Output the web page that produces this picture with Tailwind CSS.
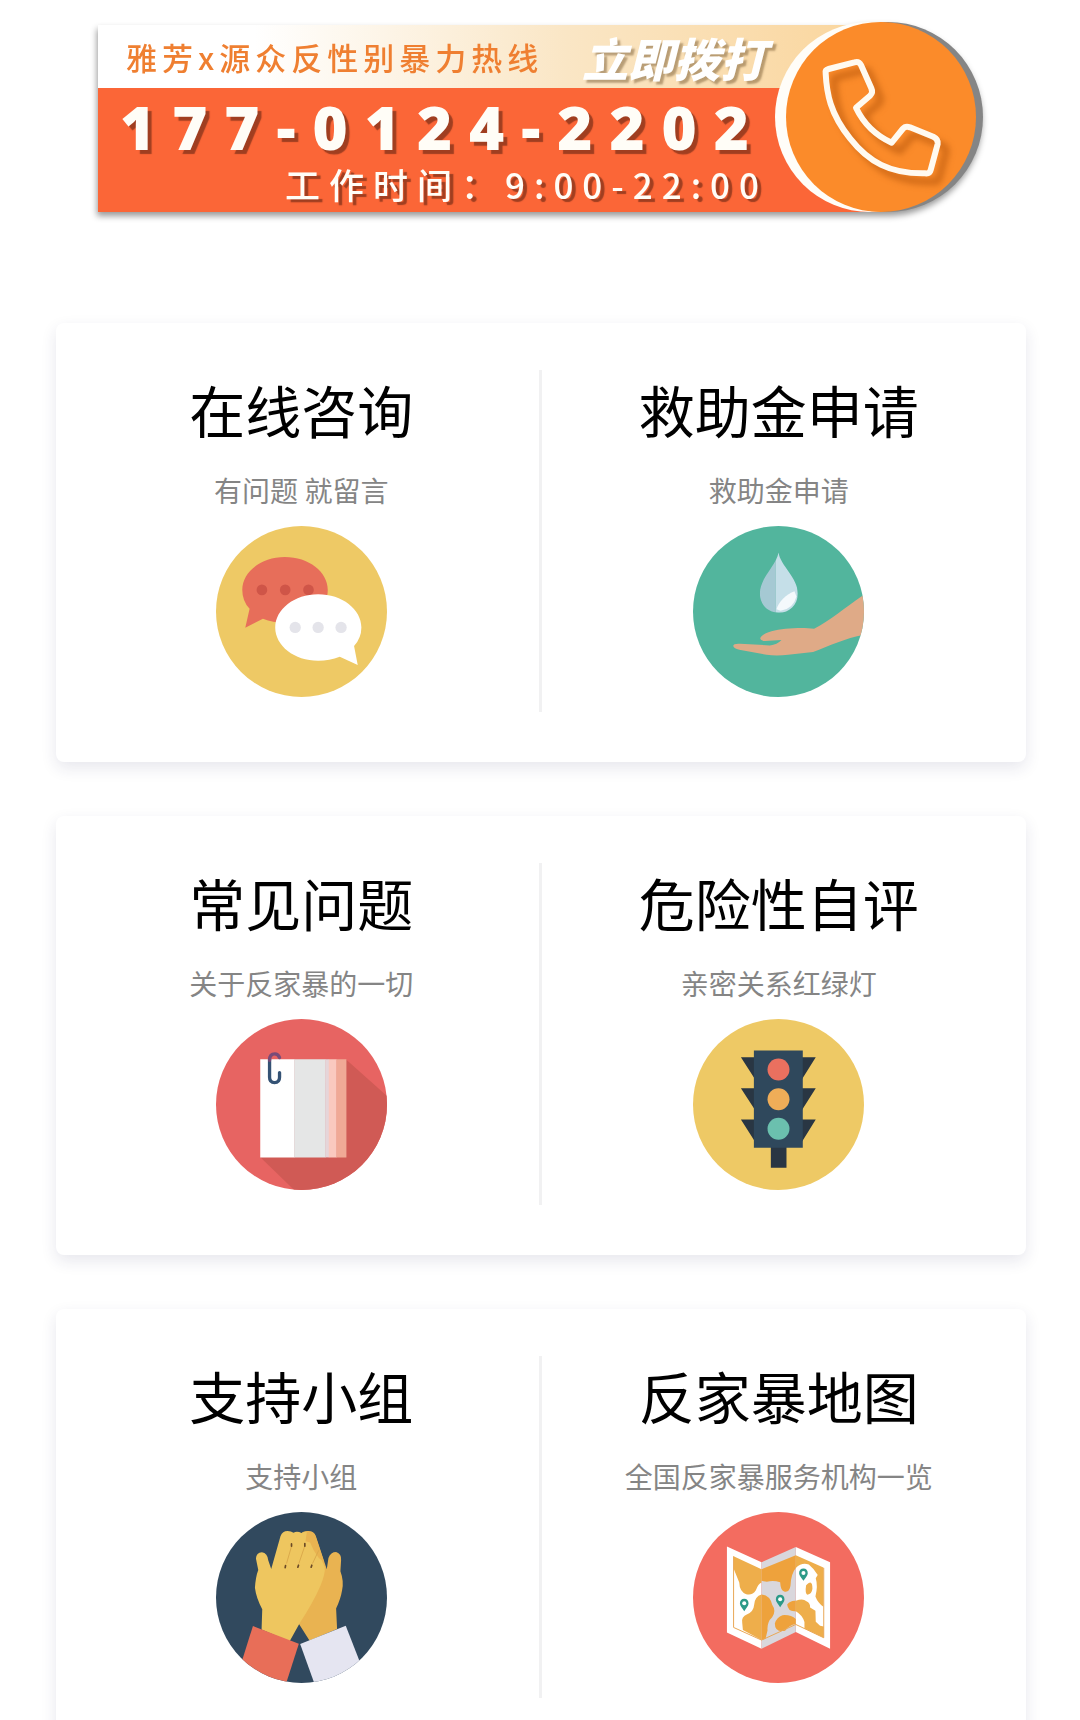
<!DOCTYPE html>
<html lang="zh-CN">
<head>
<meta charset="utf-8">
<meta name="viewport" content="width=device-width, initial-scale=1">
<title>反家暴服务</title>
<script src="https://cdn.jsdelivr.net/npm/@tailwindcss/browser@4"></script>
</head>
<body class="bg-white font-['Noto_Sans_CJK_SC',sans-serif] text-black">
<div class="h-screen overflow-hidden">

<header class="pt-[15px] pr-[90px] pl-[98px]">
  <a href="tel:177-0124-2202" class="flex items-start drop-shadow-[-1px_4px_3px_rgba(0,0,0,0.4)]">
    <div class="mt-[10px] -mr-[110px] flex-1 whitespace-nowrap">
      <div class="flex h-[63px] items-center bg-linear-to-r from-white from-20% via-[#fae6c5] via-60% to-[#fad59b] pl-7">
        <span class="w-[456px] text-[31px] leading-10 font-medium tracking-[5px] text-[#ef7f31]">雅芳x源众反性别暴力热线</span>
        <span class="text-[46px] leading-[48px] font-black text-white italic [text-shadow:3px_3px_2px_rgba(120,90,50,0.5)]">立即拨打</span>
      </div>
      <div class="h-[124px] bg-[#fb6637] pt-[7px] pl-[22px] text-[#fffdf7]">
        <div class="font-['Noto_Sans',sans-serif] text-[60px] leading-[64px] font-black tracking-[17px] [text-shadow:4px_4px_1px_rgba(130,50,25,0.75)]">177-0124-2202</div>
        <div class="pl-[165px] text-[35px] leading-[50px] font-medium tracking-[9px] [text-shadow:4px_3px_1px_rgba(130,50,25,0.75)]">工作时间：9:00-22:00</div>
      </div>
    </div>
    <svg class="relative h-[205px] w-[220px] shrink-0" viewBox="0 0 220 205" aria-hidden="true">
      <circle cx="118" cy="102" r="95" fill="#858585"/>
      <circle cx="100" cy="102" r="95" fill="#fffdf8"/>
      <circle cx="111" cy="102" r="95" fill="#fb8b2a"/>
      <g transform="translate(-230 -5) scale(.33333)" fill="none" stroke-linejoin="round">
        <path class="blur-[10px]" transform="translate(25 25)" stroke="#b8570c" stroke-opacity=".65" stroke-width="20" d="M857 190Q855 180 866 177L943 157Q957 153 963 165L994 235Q1000 248 990 257L948 293C968 335 1005 375 1055 398L1088 357Q1096 347 1110 352L1180 380Q1195 387 1193 402L1172 480Q1169 492 1155 490C1050 492 985 455 930 385C870 310 860 250 857 190Z"/>
        <path stroke="#fffaf0" stroke-width="18" d="M857 190Q855 180 866 177L943 157Q957 153 963 165L994 235Q1000 248 990 257L948 293C968 335 1005 375 1055 398L1088 357Q1096 347 1110 352L1180 380Q1195 387 1193 402L1172 480Q1169 492 1155 490C1050 492 985 455 930 385C870 310 860 250 857 190Z"/>
      </g>
    </svg>
  </a>
</header>

<main class="mt-[103px] mr-[54px] ml-[56px] flex flex-col gap-[54px]">

  <section class="flex rounded-lg bg-white py-[47px] pr-[10px] pl-2 shadow-[0_6px_16px_rgba(40,40,90,0.11)]">
    <a href="#consult" class="flex flex-1 flex-col items-center pt-[10px] pb-[18px]">
      <h2 class="text-[56px] leading-[58px]">在线咨询</h2>
      <p class="mt-[32px] text-[28px] leading-10 text-[#858585]">有问题 就留言</p>
      <svg class="mt-4 size-[171px]" viewBox="49 50 514 514" aria-hidden="true">
        <circle cx="306" cy="307" r="257" fill="#eec965"/>
        <path fill="#e76e5a" d="M256 143C328 143 385 188 385 242C385 298 328 341 256 341Q220 341 190 329L137 356L150 299Q128 275 128 242C128 188 185 143 256 143Z"/>
        <g fill="#cf5548"><circle cx="187" cy="242" r="16"/><circle cx="257" cy="242" r="16"/><circle cx="327" cy="242" r="16"/></g>
        <path fill="#fff" d="M356 255C428 255 486 300 486 355Q486 386 464 411L475 468L421 443Q390 455 356 455C285 455 227 410 227 355C227 300 285 255 356 255Z"/>
        <g fill="#e4e4ea"><circle cx="287" cy="355" r="17"/><circle cx="356" cy="355" r="17"/><circle cx="425" cy="355" r="17"/></g>
      </svg>
    </a>
    <div class="mb-[3px] w-[3px] bg-[#f1f1f2]"></div>
    <a href="#relief" class="flex flex-1 flex-col items-center pt-[10px] pb-[18px]">
      <h2 class="text-[56px] leading-[58px]">救助金申请</h2>
      <p class="mt-[32px] text-[28px] leading-10 text-[#858585]">救助金申请</p>
      <svg class="mt-4 size-[171px]" viewBox="39 50 514 514" aria-hidden="true">
        <clipPath id="relief-disc"><circle cx="296" cy="307" r="257"/></clipPath>
        <clipPath id="drop"><path d="M296 130C302 170 354 205 354 253C354 288 328 311 297 311C266 311 240 288 240 253C240 205 290 170 296 130Z"/></clipPath>
        <circle cx="296" cy="307" r="257" fill="#52b59d"/>
        <g clip-path="url(#drop)">
          <path fill="#a5c9d3" d="M230 120H288V320H230Z"/>
          <path fill="#c5dfe8" d="M288 120H360V320H288Z"/>
          <path fill="#f4f9fc" d="M344 246C320 254 296 278 290 300L302 305Q340 300 350 262Z"/>
        </g>
        <path clip-path="url(#relief-disc)" fill="#dfaa87" d="M560 252L545 262C500 292 450 335 403 359C365 354 310 358 275 366Q248 373 241 387Q242 396 256 396L305 393Q292 407 270 409L180 404Q160 403 160 411Q162 419 178 422L260 437Q290 442 325 437L400 429C450 410 500 386 560 376Z"/>
      </svg>
    </a>
  </section>

  <section class="flex rounded-lg bg-white py-[47px] pr-[10px] pl-2 shadow-[0_6px_16px_rgba(40,40,90,0.11)]">
    <a href="#faq" class="flex flex-1 flex-col items-center pt-[10px] pb-[18px]">
      <h2 class="text-[56px] leading-[58px]">常见问题</h2>
      <p class="mt-[32px] text-[28px] leading-10 text-[#858585]">关于反家暴的一切</p>
      <svg class="mt-4 size-[171px]" viewBox="49 60 514 514" aria-hidden="true">
        <clipPath id="faq-disc"><circle cx="306" cy="317" r="257"/></clipPath>
        <circle cx="306" cy="317" r="257" fill="#e76462"/>
        <path clip-path="url(#faq-disc)" fill="#d05a55" d="M440 182L570 298V580H290L183 476Z"/>
        <path fill="#fff" d="M182 181H285V476H182Z"/>
        <path fill="#e5e6e6" d="M284 181H379V476H284Z"/>
        <path fill="#e5d5d9" d="M378 181H389V476H378Z"/>
        <path fill="#fac9bf" d="M388 181H412V476H388Z"/>
        <path fill="#f0a996" d="M411 181H441V476H411Z"/>
        <path fill="none" stroke="#345274" stroke-width="10" stroke-linecap="round" d="M240 221V235Q240 251 225 251Q210 251 210 235V181"/>
        <path fill="none" stroke="#794b78" stroke-width="10" stroke-linecap="round" d="M210 184Q210 165 226 165Q236 165 240 176"/>
      </svg>
    </a>
    <div class="mb-[3px] w-[3px] bg-[#f1f1f2]"></div>
    <a href="#risk" class="flex flex-1 flex-col items-center pt-[10px] pb-[18px]">
      <h2 class="text-[56px] leading-[58px]">危险性自评</h2>
      <p class="mt-[32px] text-[28px] leading-10 text-[#858585]">亲密关系红绿灯</p>
      <svg class="mt-4 size-[171px]" viewBox="39 60 514 514" aria-hidden="true">
        <circle cx="296" cy="317" r="257" fill="#eec965"/>
        <path fill="#293643" d="M183 175H408L367 240H225ZM183 268H408L367 333H225ZM183 362H408L367 428H225ZM273 440H320V507H273Z"/>
        <path fill="#2f485c" d="M222 155H369V447H222Z"/>
        <circle cx="296" cy="212" r="33" fill="#ea705f"/>
        <circle cx="296" cy="301" r="33" fill="#efad58"/>
        <circle cx="296" cy="390" r="33" fill="#6bc0ae"/>
      </svg>
    </a>
  </section>

  <section class="flex rounded-lg bg-white py-[47px] pr-[10px] pl-2 shadow-[0_6px_16px_rgba(40,40,90,0.11)]">
    <a href="#group" class="flex flex-1 flex-col items-center pt-[10px] pb-[18px]">
      <h2 class="text-[56px] leading-[58px]">支持小组</h2>
      <p class="mt-[32px] text-[28px] leading-10 text-[#858585]">支持小组</p>
      <svg class="mt-4 size-[171px]" viewBox="49 40 514 514" aria-hidden="true">
        <clipPath id="group-disc"><circle cx="306" cy="297" r="257"/></clipPath>
        <circle cx="306" cy="297" r="257" fill="#31495e"/>
        <path fill="#e9b351" d="M300 110Q310 96 325 97Q343 96 349 112L382 212L387 178Q394 160 410 160Q427 165 425 185L423 218Q434 248 428 275Q424 300 410 330L413 392L330 426L298 376L280 300Z"/>
        <path fill="#eec65f" d="M243 112Q249 97 264 97Q275 98 282 102Q293 97 306 103Q318 97 330 100L352 125L361 172L376 205Q378 225 363 262Q340 315 300 375L270 429L186 393L188 332Q170 300 166 268Q168 235 176 214L169 180Q170 162 187 161Q204 164 206 185L215 211Z"/>
        <path fill="#e9b351" d="M322 100Q344 98 348 112L374 190L358 178L343 156L332 132L318 128Z"/>
        <g stroke="#dbaa4b" stroke-width="3" fill="none"><path d="M276 143L261 195M316 142L298 195M358 155L339 195"/></g>
        <g stroke="#6b4a26" stroke-width="5" stroke-linecap="round"><path d="M276 136V143M316 135V143M258 201L257 207M297 200L295 206M337 200L335 206"/></g>
        <g clip-path="url(#group-disc)">
          <path fill="#e86e58" d="M160 383L298 436L255 570L120 510Z"/>
          <path fill="#e5e5f1" d="M302 437L439 382L485 500L350 570Z"/>
        </g>
      </svg>
    </a>
    <div class="mb-[3px] w-[3px] bg-[#f1f1f2]"></div>
    <a href="#map" class="flex flex-1 flex-col items-center pt-[10px] pb-[18px]">
      <h2 class="text-[56px] leading-[58px]">反家暴地图</h2>
      <p class="mt-[32px] text-[28px] leading-10 text-[#858585]">全国反家暴服务机构一览</p>
      <svg class="mt-4 size-[171px]" viewBox="40 40 514 514" aria-hidden="true">
        <circle cx="297" cy="297" r="257" fill="#f36c60"/>
        <path fill="#fff" d="M142 144L246 191V451L142 402ZM349 145L452 191V451L349 401Z"/>
        <path fill="#d9d7dc" d="M246 191L349 145V401L246 451Z"/>
        <path fill="#eeae4b" d="M162 173L246 212V252Q236 256 229 275Q218 292 200 287Q180 280 179 252L162 210Z"/>
        <path fill="#eea23c" d="M246 212L349 170V208Q334 226 333 262Q330 283 314 279Q303 275 302 251Q280 244 262 250L246 247Z"/>
        <path fill="#eeae4b" d="M246 288Q226 294 224 318Q222 340 203 347Q184 354 188 374L190 395L246 425Z"/>
        <path fill="#eea23c" d="M246 288Q272 291 278 319Q291 337 278 356Q262 370 264 396L258 421L246 425ZM286 375Q292 355 309 350Q335 348 349 362V377Q329 380 317 397Q286 403 286 375ZM323 318Q334 305 349 307V338Q326 341 323 318Z"/>
        <path fill="#eeae4b" d="M349 170L432 207L415 229L402 211L388 198Q368 190 349 208ZM432 207V325Q415 313 408 294Q416 262 409 239L420 220ZM380 260Q399 240 399 271Q397 287 384 289Q376 284 380 260ZM349 307Q370 298 381 308Q393 313 392 327L408 337L409 370L422 382L433 384V418L375 390V371Q370 350 349 338Z"/>
        <path fill="none" stroke="#e9a855" stroke-width="3" d="M162 173V387L246 425L349 378L433 418V208"/>
        <g fill="#2c9a88"><path id="pin" d="M194 301C202 301 207 307 207 315C207 323 200 328 194 338C188 328 181 323 181 315C181 307 186 301 194 301Z"/><use href="#pin" x="108" y="-12"/><use href="#pin" x="178" y="-91"/></g>
        <g fill="#fff"><circle cx="194" cy="314" r="6"/><circle cx="302" cy="302" r="6"/><circle cx="372" cy="223" r="6"/></g>
      </svg>
    </a>
  </section>

</main>
</div>
</body>
</html>
